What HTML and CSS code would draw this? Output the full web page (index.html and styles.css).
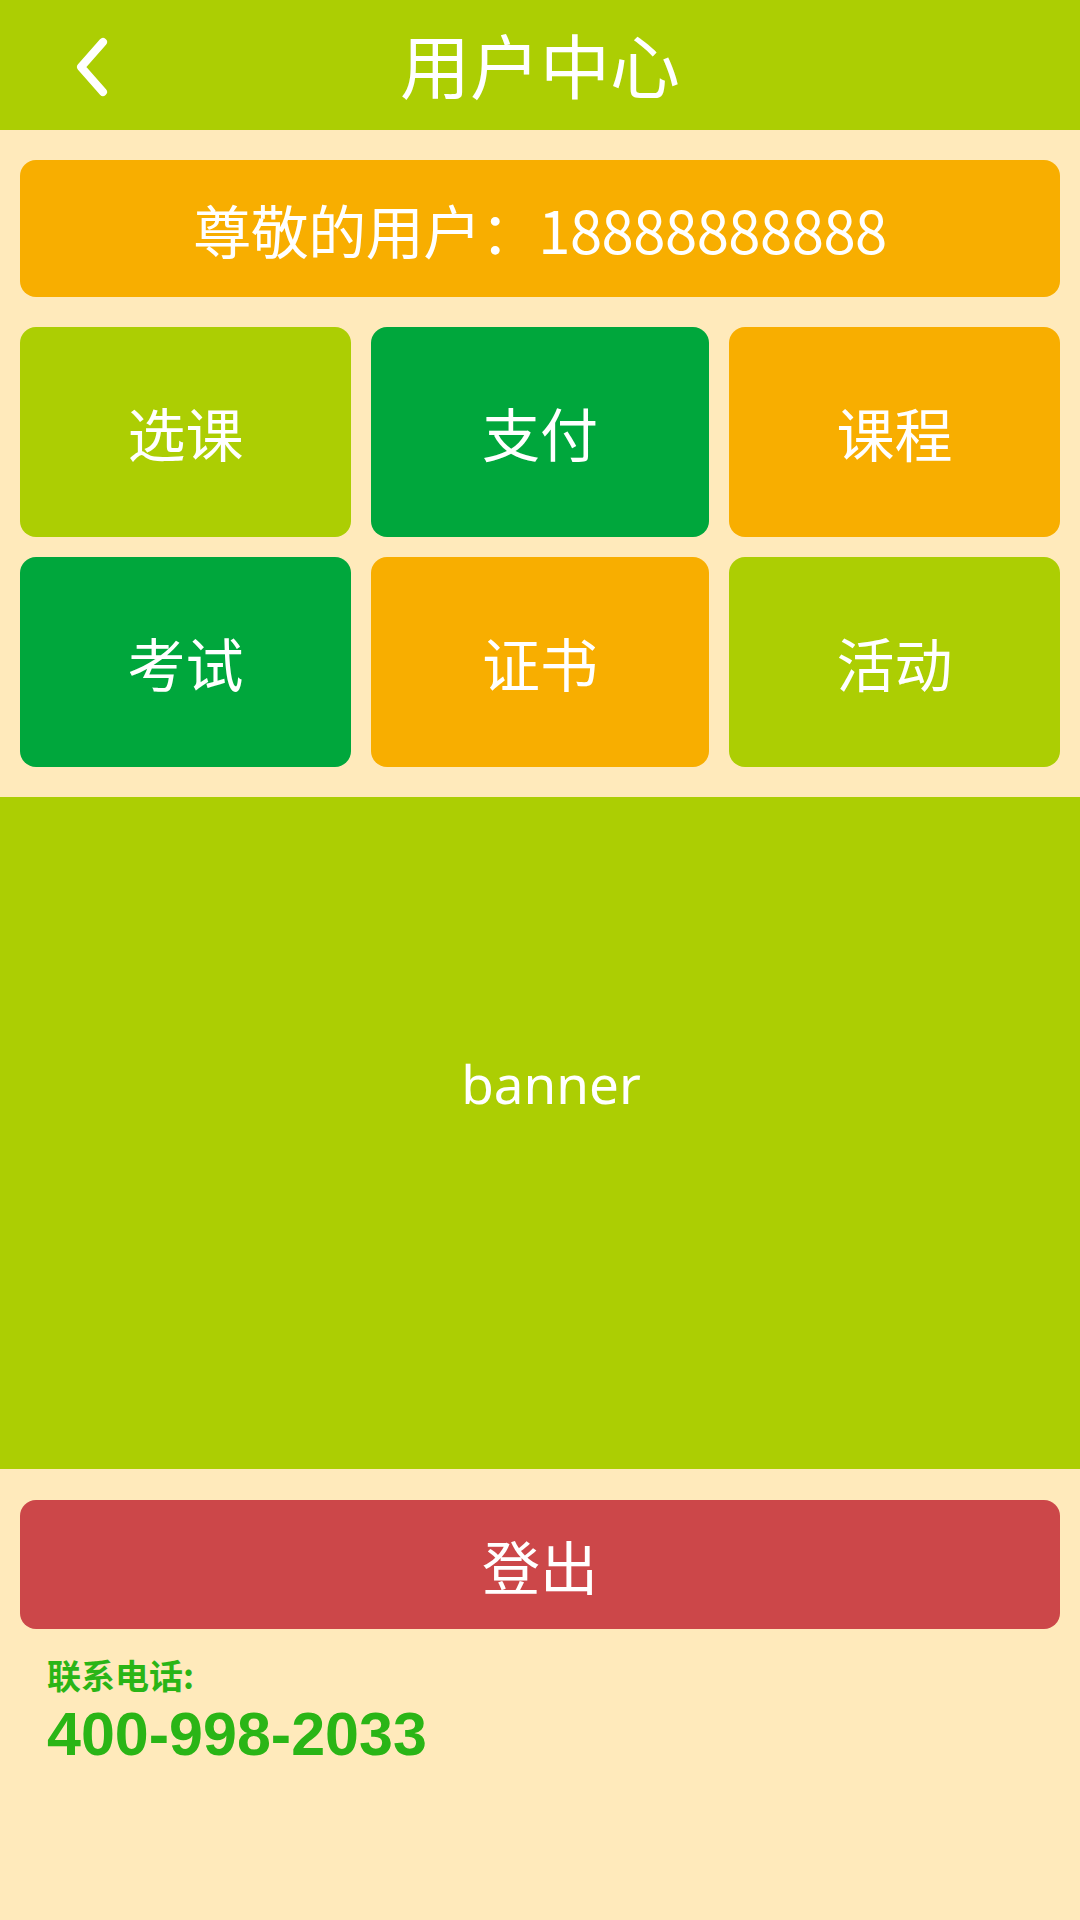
FILE: index.html
```html
<!DOCTYPE html>
<html lang="zh-CN">
<head>
<meta charset="utf-8">
<title>用户中心</title>
<link rel="stylesheet" href="styles.css">
</head>
<body>
<header class="topbar">
  <div class="back">
    <svg width="40" height="64" viewBox="0 0 40 64" aria-hidden="true">
      <path d="M31 8 L9 33 L31 58" fill="none" stroke="#fff" stroke-width="8" stroke-linecap="round" stroke-linejoin="round"/>
    </svg>
  </div>
  <h1 class="title">用户中心</h1>
  <div></div>
</header>

<section class="top">
  <div class="user-card">尊敬的用户：18888888888</div>
  <div class="menu">
    <div class="tile lime">选课</div>
    <div class="tile green">支付</div>
    <div class="tile orange">课程</div>
    <div class="tile green">考试</div>
    <div class="tile orange">证书</div>
    <div class="tile lime">活动</div>
  </div>
</section>

<section class="banner"><span class="banner-text">banner</span></section>

<section class="bottom">
  <div class="logout">登出</div>
  <div class="contact">
    <div class="contact-label">联系电话:</div>
    <div class="contact-phone">400-998-2033</div>
  </div>
</section>
</body>
</html>
```

FILE: styles.css
```css
html, body {
  margin: 0;
  padding: 0;
}
body {
  width: 1080px;
  height: 1920px;
  background: #FFEABB;
  font-family: "Noto Sans CJK SC", "Noto Sans", sans-serif;
  color: #fff;
  overflow: hidden;
}
.topbar {
  height: 130px;
  background: #ACCE03;
  display: grid;
  grid-template-columns: 1fr auto 1fr;
  align-items: center;
}
.back {
  padding-left: 72px;
  display: flex;
  align-items: center;
  padding-top: 1px;
}
.back svg { display: block; }
.title {
  margin: 0;
  font-size: 70px;
  font-weight: 400;
  line-height: 1;
  padding-bottom: 2px;
}
.top {
  padding: 30px 20px 0;
}
.user-card {
  height: 137px;
  border-radius: 16px;
  background: #F8AE00;
  display: flex;
  align-items: center;
  justify-content: center;
  font-size: 58px;
  line-height: 1;
  letter-spacing: -0.5px;
}
.menu {
  margin-top: 30px;
  display: grid;
  grid-template-columns: 331px 338px 331px;
  grid-auto-rows: 210px;
  column-gap: 20px;
  row-gap: 20px;
}
.tile {
  border-radius: 16px;
  display: flex;
  align-items: center;
  justify-content: center;
  font-size: 58px;
  line-height: 1;
}
.lime { background: #ACCE03; }
.green { background: #00A73C; }
.orange { background: #F8AE00; }
.banner {
  margin-top: 30px;
  height: 672px;
  background: #ACCE03;
  display: flex;
  justify-content: center;
  padding-top: 260px;
  box-sizing: border-box;
  padding-left: 22px;
}
.banner-text {
  font-family: "Noto Sans", sans-serif;
  font-size: 53px;
  line-height: 1;
  height: 60px;
}
.bottom {
  padding: 31px 20px 0;
}
.logout {
  height: 129px;
  border-radius: 16px;
  background: #CC4749;
  display: flex;
  align-items: center;
  justify-content: center;
  font-size: 58px;
  line-height: 1;
}
.contact {
  padding: 21px 0 0 27px;
  color: #2AB516;
}
.contact-label {
  font-size: 34px;
  font-weight: 700;
  line-height: 49px;
}
.contact-phone {
  font-family: "Liberation Sans", Arial, sans-serif;
  font-size: 61px;
  font-weight: 700;
  line-height: 71px;
}
```
